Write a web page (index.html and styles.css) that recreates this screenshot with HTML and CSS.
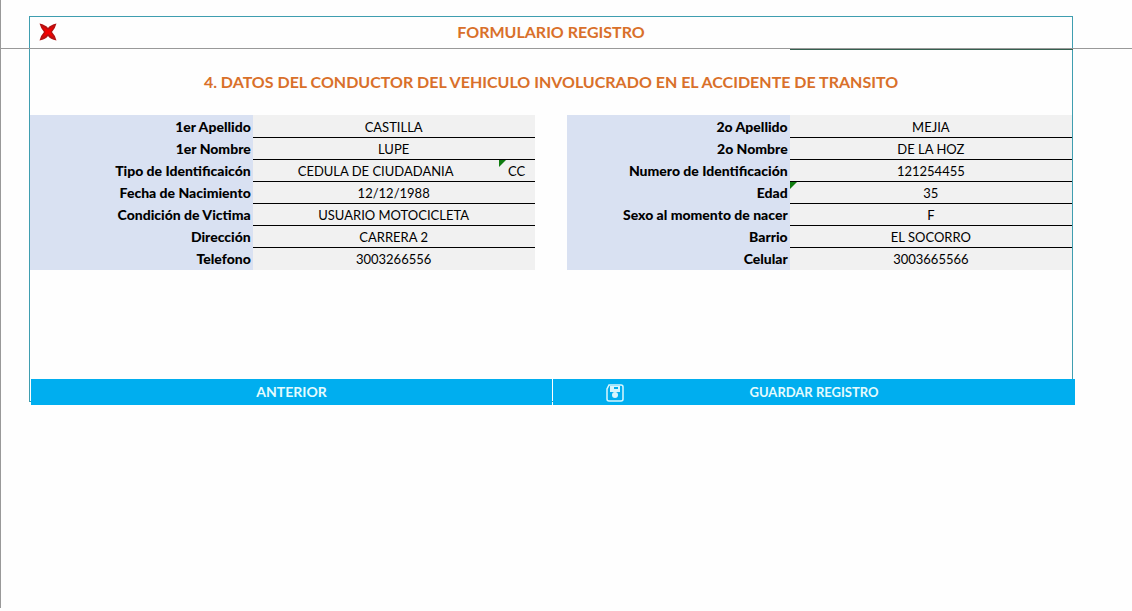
FILE: index.html
```html
<!DOCTYPE html>
<html lang="es">
<head>
<meta charset="utf-8">
<meta name="viewport" content="width=device-width, initial-scale=1">
<title>Formulario Registro</title>
<link rel="stylesheet" href="styles.css">
</head>
<body>
<main class="sheet">
  <header class="topbar">
    <div class="topbar-frame">
      <button class="close" type="button" aria-label="Cerrar">
        <svg viewBox="0 0 18 18" width="18" height="18" aria-hidden="true">
          <path d="M0.500 0.500 Q7 2 9 5 Q11 2 17.500 0.500 Q16 6 13 9 Q16 12 17.500 17.500 Q11 16 9 13 Q7 16 0.500 17.500 Q2 12 5 9 Q2 6 0.500 0.500 Z" fill="#b51212"/>
          <path d="M3 3 L9 7 L15 3 L11.500 9 L15 15 L9 11 L3 15 L6.500 9 Z" fill="#f40000"/>
        </svg>
      </button>
      <h1 class="title">FORMULARIO REGISTRO</h1>
    </div>
  </header>
  <form class="frame">
    <div class="accent"></div>
    <h2 class="title section-title">4. DATOS DEL CONDUCTOR DEL VEHICULO INVOLUCRADO EN EL ACCIDENTE DE TRANSITO</h2>
    <div class="columns">
      <div class="group">
        <div class="row"><label class="label" for="apellido1">1er Apellido</label><div class="cell"><input class="value" id="apellido1" value="CASTILLA"></div></div>
        <div class="row"><label class="label" for="nombre1">1er Nombre</label><div class="cell"><input class="value" id="nombre1" value="LUPE"></div></div>
        <div class="row"><label class="label" for="tipo">Tipo de Identificaicón</label><div class="cell split"><input class="value" id="tipo" value="CEDULA DE CIUDADANIA"><div class="code flagged"><input class="value" aria-label="Código de identificación" value="CC"></div></div></div>
        <div class="row"><label class="label" for="nacimiento">Fecha de Nacimiento</label><div class="cell"><input class="value" id="nacimiento" value="12/12/1988"></div></div>
        <div class="row"><label class="label" for="condicion">Condición de Victima</label><div class="cell"><input class="value" id="condicion" value="USUARIO MOTOCICLETA"></div></div>
        <div class="row"><label class="label" for="direccion">Dirección</label><div class="cell"><input class="value" id="direccion" value="CARRERA 2"></div></div>
        <div class="row"><label class="label" for="telefono">Telefono</label><div class="cell"><input class="value" id="telefono" value="3003266556"></div></div>
      </div>
      <div class="group">
        <div class="row"><label class="label" for="apellido2">2o Apellido</label><div class="cell"><input class="value" id="apellido2" value="MEJIA"></div></div>
        <div class="row"><label class="label" for="nombre2">2o Nombre</label><div class="cell"><input class="value" id="nombre2" value="DE LA HOZ"></div></div>
        <div class="row"><label class="label" for="numero">Numero de Identificación</label><div class="cell"><input class="value" id="numero" value="121254455"></div></div>
        <div class="row"><label class="label" for="edad">Edad</label><div class="cell flagged"><input class="value" id="edad" value="35"></div></div>
        <div class="row"><label class="label" for="sexo">Sexo al momento de nacer</label><div class="cell"><input class="value" id="sexo" value="F"></div></div>
        <div class="row"><label class="label" for="barrio">Barrio</label><div class="cell"><input class="value" id="barrio" value="EL SOCORRO"></div></div>
        <div class="row"><label class="label" for="celular">Celular</label><div class="cell"><input class="value" id="celular" value="3003665566"></div></div>
      </div>
    </div>
    <div class="actions">
      <button class="action" type="button">ANTERIOR</button>
      <button class="action save" type="button">
        <svg class="save-icon" viewBox="0 0 18 18" width="18" height="18" aria-hidden="true">
          <path d="M3 1 H15 Q17 1 17 3 V15 Q17 17 15 17 H3 Q1 17 1 15 V5 Z" fill="none" stroke="#d9f6fd" stroke-width="1.500"/>
          <path d="M4 2 H14 V8 H4 Z" fill="#d9f6fd"/>
          <path d="M8 3 H12 V5 H8 Z" fill="#00aeef"/>
          <circle cx="9" cy="11" r="3" fill="#d9f6fd"/>
        </svg>
        <span>GUARDAR REGISTRO</span>
      </button>
    </div>
  </form>
</main>
</body>
</html>
```
FILE: styles.css
```css
* { box-sizing: border-box; }

body {
  margin: 0;
  background: #fefefe;
  color: #000;
  font-family: Lato, "Liberation Sans", sans-serif;
}

.sheet {
  min-height: calc(100vh - 3px);
  border-left: 1px solid #999;
}

.topbar {
  padding: 16px 59px 0 28px;
  border-bottom: 1px solid #999;
}

.topbar-frame {
  display: grid;
  grid-template-columns: 36px 1fr 36px;
  align-items: center;
  height: 32px;
  padding-bottom: 2px;
  border: 1px solid #3f9eb0;
  border-bottom: 0;
}

.close {
  display: flex;
  justify-content: center;
  padding: 0;
  border: 0;
  background: none;
}

.title {
  margin: 0;
  color: #d9702a;
  font-size: 16px;
  font-weight: 700;
  line-height: 20px;
  text-align: center;
}

.frame {
  margin: 0 59px 0 28px;
  border: 1px solid #3f9eb0;
  border-top: 0;
}

.accent {
  width: calc(27% + 2px);
  height: 1px;
  margin: 0 -1px 0 auto;
  background: #35604f;
}

.section-title {
  padding: 22px 0 23px;
}

.columns {
  display: grid;
  grid-template-columns: 505fr 506fr;
  gap: 32px;
}

.row {
  display: grid;
  grid-template-columns: 223fr 282fr;
  grid-template-rows: 22px;
}

.row:first-child { grid-template-rows: 23px; }

.label {
  padding-right: 2px;
  background: #d9e1f2;
  font-size: 14px;
  font-weight: 900;
  line-height: 22px;
  text-align: right;
  white-space: nowrap;
}

.row:first-child .label { padding-top: 1px; }

.cell {
  display: grid;
  position: relative;
  border-bottom: 1px solid #000;
  background: #f1f1f1;
}

.row:last-child .cell { border-bottom: 0; }

.split { grid-template-columns: 1fr 36px; }

.code {
  display: grid;
  position: relative;
}

.flagged::before {
  content: "";
  position: absolute;
  top: 0;
  left: 0;
  border-top: 7px solid #107c10;
  border-right: 7px solid transparent;
}

.value {
  width: 100%;
  min-width: 0;
  height: 21px;
  padding: 0;
  border: 0;
  background: transparent;
  color: #000;
  font-family: inherit;
  font-size: 13px;
  font-weight: 400;
  text-align: center;
}

.row:first-child .value {
  height: 22px;
  padding-top: 2px;
}

.actions {
  display: grid;
  grid-template-columns: 521fr 522fr;
  gap: 1px;
  margin: 109px -3px -4px 1px;
}

.action {
  height: 26px;
  padding: 0 0 2px;
  border: 0;
  background: #00aeef;
  color: #e4fbfd;
  font-family: inherit;
  font-size: 14px;
  font-weight: 700;
}

.save {
  display: grid;
  grid-template-columns: 1fr auto 1fr;
  align-items: center;
  padding: 0;
  font-size: 13px;
}

.save-icon {
  margin-top: 2px;
  margin-left: 27%;
}
```
